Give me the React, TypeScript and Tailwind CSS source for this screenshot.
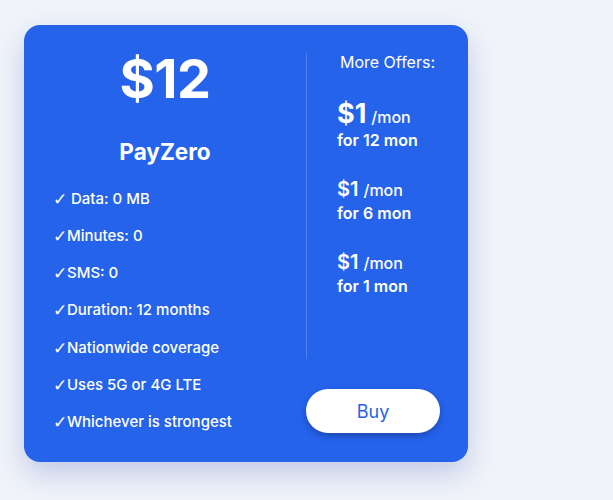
import React from "react";

const features = [
  "\u00a0Data: 0 MB",
  "Minutes: 0",
  "SMS: 0",
  "Duration: 12 months",
  "Nationwide coverage",
  "Uses 5G or 4G LTE",
  "Whichever is strongest",
];

export default function App() {
  return (
    <div
      className="min-h-screen bg-[#f0f3f9] pl-[24px] pt-[25px]"
      style={{ fontFamily: "Inter, 'Noto Sans', 'DejaVu Sans', sans-serif" }}
    >
      <div className="flex h-[437px] w-[444px] rounded-2xl bg-[#2563eb] text-white shadow-[0_12px_28px_rgba(30,64,175,0.22)]">
        {/* Left column */}
        <div className="flex w-[282px] flex-col items-center pt-[27px]">
          <div className="text-[54px] font-bold leading-none tracking-[-0.5px]">$12</div>
          <div className="mt-[35px] text-[22.5px] font-bold leading-none">PayZero</div>
          <ul className="mt-[23px] flex w-full flex-col gap-[13.33px] pl-[29px] text-[15px] font-medium leading-[24px]">
            {features.map((f) => (
              <li key={f} className="flex items-center">
                <span className="w-[14px] font-['DejaVu_Sans',sans-serif] text-[17px] font-normal leading-[24px]">✓</span>
                <span>{f}</span>
              </li>
            ))}
          </ul>
        </div>

        {/* Right column */}
        <div className="flex flex-1 flex-col">
          <div className="mt-[28px] flex h-[306px] flex-col border-l border-white/20">
            <div className="-mt-[3px] text-center text-[16px] leading-[24px]">More Offers:</div>
            <div className="mt-[26px] flex flex-col gap-[26px] pl-[30px]">
              <div className="flex flex-col">
                <div className="flex items-baseline gap-[5px]">
                  <span className="text-[27px] font-bold leading-[28px]">$1</span>
                  <span className="text-[16px] font-medium leading-[24px]">/mon</span>
                </div>
                <div className="text-[16px] font-semibold leading-[22px]">for 12 mon</div>
              </div>
              <div className="flex flex-col">
                <div className="flex items-baseline gap-[5px]">
                  <span className="text-[20px] font-semibold leading-[24px]">$1</span>
                  <span className="text-[16px] font-medium leading-[24px]">/mon</span>
                </div>
                <div className="text-[16px] font-semibold leading-[22px]">for 6 mon</div>
              </div>
              <div className="flex flex-col">
                <div className="flex items-baseline gap-[5px]">
                  <span className="text-[20px] font-semibold leading-[24px]">$1</span>
                  <span className="text-[16px] font-medium leading-[24px]">/mon</span>
                </div>
                <div className="text-[16px] font-semibold leading-[22px]">for 1 mon</div>
              </div>
            </div>
          </div>
          <button className="mt-[30px] flex h-[44px] w-[134px] items-center justify-center rounded-full bg-white text-[18px] text-[#2563eb] shadow-[0_3px_6px_rgba(15,23,80,0.35)]">
            Buy
          </button>
        </div>
      </div>
    </div>
  );
}
